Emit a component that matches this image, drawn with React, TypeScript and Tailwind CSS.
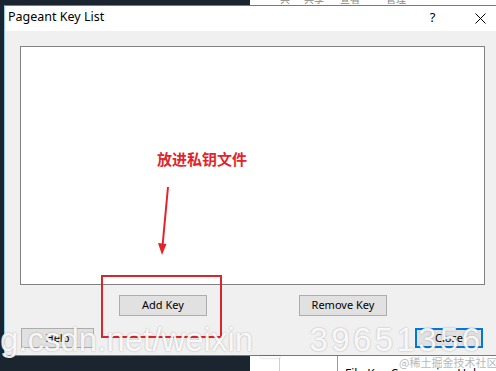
import React from "react";

const ui = { fontFamily: '"Noto Sans", "Liberation Sans", sans-serif' };

function Btn({ label, w, h, def }: { label: string; w: string; h: string; def?: boolean }) {
  return (
    <div
      className={`${w} ${h} flex items-center justify-center bg-[#e1e1e1] text-[11px] text-black ${
        def ? "border-2 border-[#0078d7]" : "border border-[#adadad]"
      }`}
      style={ui}
    >
      {label}
    </div>
  );
}

export default function App() {
  return (
    <div className="relative w-[496px] h-[371px] overflow-hidden flex bg-[#1b2530]">
      {/* desktop background */}
      <div className="w-[250px] h-full bg-[#1b2530]" />
      <div className="flex-1 h-full bg-white flex flex-col justify-between">
        <div className="flex h-[5px] overflow-hidden text-[10px] text-[#888] leading-none" style={{ fontFamily: '"Noto Sans CJK SC", sans-serif' }}>
          <span className="ml-[30px] -mt-[6px]">共</span>
          <span className="ml-[14px] -mt-[6px]">共享</span>
          <span className="ml-[16px] -mt-[6px]">查看</span>
          <span className="ml-[26px] -mt-[6px]">管理</span>
        </div>
        <div className="flex h-[15px] relative">
          <div className="w-[30px] border-r border-[#d0d0d0]" />
          <div className="w-[58px] border-r border-[#9a9a9a]" />
          <div className="flex-1 pl-[7px] pt-[12px] overflow-hidden">
            <div className="text-[12px] leading-none text-black whitespace-nowrap" style={ui}>
              File Key Conversion Help
            </div>
          </div>
        </div>
      </div>

      {/* window */}
      <div className="absolute left-[4px] top-[5px] w-[500px] h-[351px] border border-[#2b8fd0] border-l-[#8fcbec] bg-[#f0f0f0] flex flex-col">
        <div className="h-[25px] bg-white flex items-center shrink-0">
          <div className="pl-[3px] text-[12.5px] text-black leading-none pb-[2px]" style={ui}>
            Pageant Key List
          </div>
          <div className="ml-auto flex items-center">
            <div className="w-[46px] flex justify-center text-[13px] text-black leading-none pb-[2px] pr-[3px]" style={ui}>
              ?
            </div>
            <div className="w-[46px] flex justify-center">
              <svg width="11" height="11" viewBox="0 0 11 11">
                <path d="M0.5 0.5 L10.5 10.5 M10.5 0.5 L0.5 10.5" stroke="#000" strokeWidth="1" fill="none" />
              </svg>
            </div>
          </div>
        </div>
        <div className="flex-1 px-[15px] pt-[15px] flex flex-col">
          <div className="w-[465px] h-[239px] bg-white border border-[#828282]" />
          <div className="flex mt-[10px] pl-[99px] gap-[92px]">
            <Btn label="Add Key" w="w-[88px]" h="h-[21px]" />
            <Btn label="Remove Key" w="w-[88px]" h="h-[21px]" />
          </div>
          <div className="flex mt-[12px] w-[465px] justify-between">
            <div className="ml-[1px]">
              <Btn label="Help" w="w-[73px]" h="h-[20px]" />
            </div>
            <div className="mr-[2px]">
              <Btn label="Close" w="w-[68px]" h="h-[20px]" def />
            </div>
          </div>
        </div>
      </div>

      {/* annotation */}
      <div
        className="absolute left-[157px] top-[151px] text-[15px] font-bold text-[#e3242b] leading-none whitespace-nowrap"
        style={{ fontFamily: '"Noto Sans CJK SC", sans-serif' }}
      >
        放进私钥文件
      </div>
      <svg className="absolute left-0 top-0" width="496" height="371" viewBox="0 0 496 371">
        <line x1="168" y1="187" x2="162.6" y2="245" stroke="#e3242b" strokeWidth="2" />
        <path d="M158 243 L162 255 L166.5 244 Z" fill="#e3242b" />
      </svg>
      <div className="absolute left-[101px] top-[275px] w-[121px] h-[63px] border-2 border-[#d9262c]" />

      {/* watermark */}
      <div
        className="absolute left-0 top-[323px] text-[33px] leading-none text-white/90 whitespace-nowrap [text-shadow:0_0_2px_rgba(0,0,0,0.3)]"
        style={{ fontFamily: '"Liberation Sans", Arial, sans-serif' }}
      >
        <span>g.csdn.net/weixin</span>
        <span className="ml-[8px] mr-[30px]">_</span>
        <span className="tracking-[3.4px]">39651356</span>
      </div>
      <div
        className="absolute left-[399px] top-[357px] text-[11px] leading-none text-[#b8b8b8] whitespace-nowrap"
        style={{ fontFamily: '"Noto Sans CJK SC", sans-serif' }}
      >
        @稀土掘金技术社区
      </div>
    </div>
  );
}
